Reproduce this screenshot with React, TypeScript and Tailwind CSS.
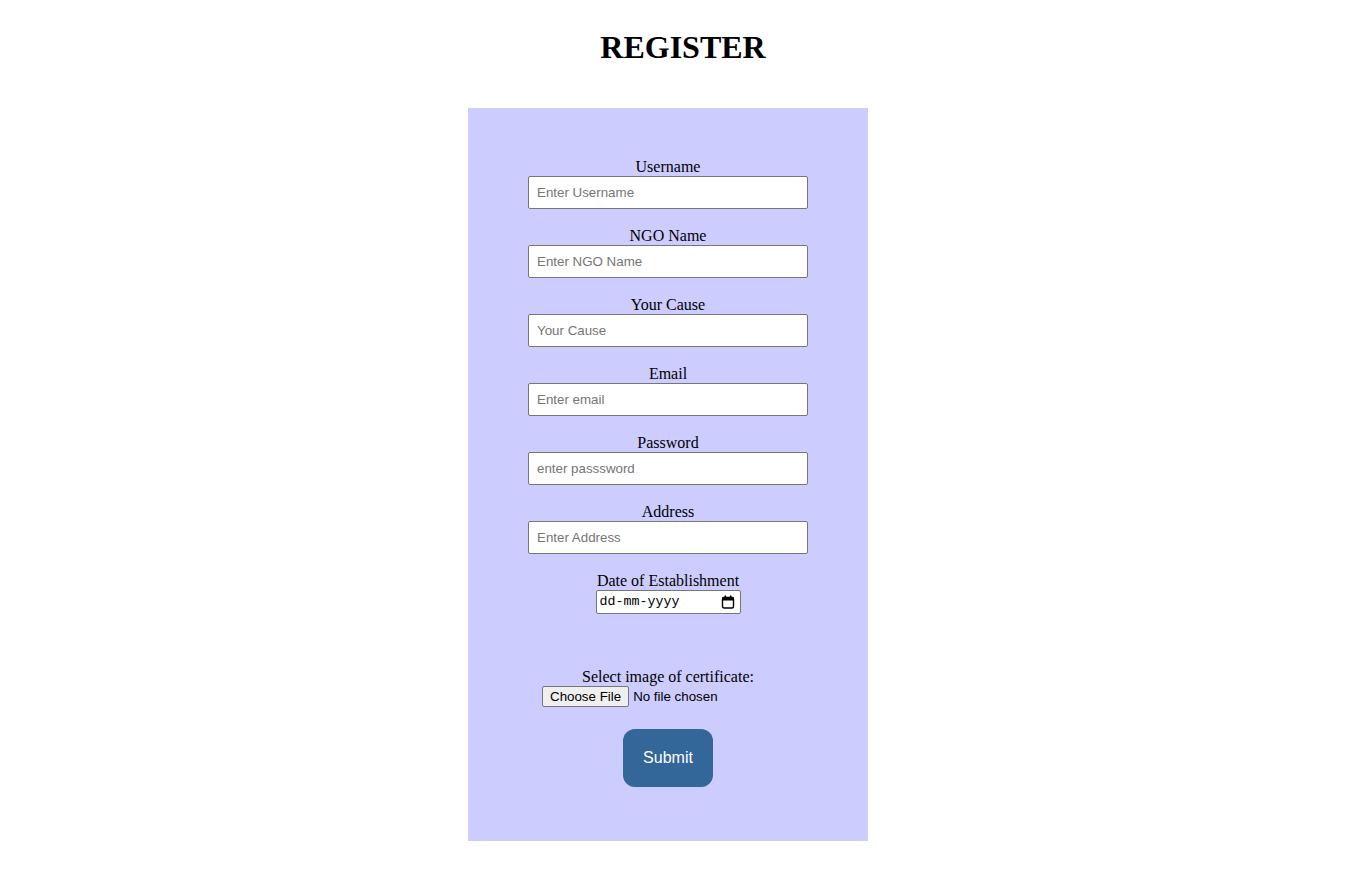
import React from 'react';

interface Field {
  label: string;
  placeholder: string;
  type: string;
}

const fields: Field[] = [
  { label: 'Username', placeholder: 'Enter Username', type: 'text' },
  { label: 'NGO Name', placeholder: 'Enter NGO Name', type: 'text' },
  { label: 'Your Cause', placeholder: 'Your Cause', type: 'text' },
  { label: 'Email', placeholder: 'Enter email', type: 'email' },
  { label: 'Password', placeholder: 'enter passsword', type: 'text' },
  { label: 'Address', placeholder: 'Enter Address', type: 'text' },
];

const CalendarIcon = () => (
  <svg width="14" height="14" viewBox="0 0 14 14" fill="none">
    <rect x="1.5" y="2.5" width="11" height="10.5" rx="1.5" stroke="#000" strokeWidth="1.4" />
    <rect x="1.5" y="2.5" width="11" height="3" fill="#000" />
    <rect x="3.5" y="0.5" width="1.6" height="3" fill="#000" />
    <rect x="8.9" y="0.5" width="1.6" height="3" fill="#000" />
  </svg>
);

export default function App() {
  return (
    <div className="min-h-screen bg-white text-black font-['Liberation_Serif',serif]">
      {/* Title */}
      <h1 className="pt-[29px] text-center text-[32px] leading-[37px] font-bold">REGISTER</h1>

      {/* Form panel */}
      <div className="pr-[30px]">
        <form className="mx-auto mt-[42px] w-[400px] bg-[#ccccff] pt-[50px] pb-[54px] flex flex-col items-center">
          {fields.map((f) => (
            <div key={f.label} className="flex flex-col items-center mb-[18px]">
              <label className="text-[16px] leading-[18px]">{f.label}</label>
              <input
                type={f.type}
                placeholder={f.placeholder}
                className="w-[280px] h-[33px] bg-white border border-[#767676] rounded-[2px] px-[8px] text-[13.33px] font-['Liberation_Sans',Arial,sans-serif] placeholder:text-[#757575] outline-none"
              />
            </div>
          ))}

          <div className="flex flex-col items-center">
            <label className="text-[16px] leading-[18px]">Date of Establishment</label>
            <div className="w-[145px] h-[24px] bg-white border border-[#767676] rounded-[2px] pl-[3px] pr-[5px] flex items-center justify-between text-[13.33px] font-['Liberation_Mono',monospace]">
              <span>dd-mm-yyyy</span>
              <CalendarIcon />
            </div>
          </div>

          <div className="flex flex-col items-center mt-[54px]">
            <label className="text-[16px] leading-[18px]">Select image of certificate:</label>
            <input
              type="file"
              className="w-[252px] h-[21px] text-[13.33px] font-['Liberation_Sans',Arial,sans-serif] file:h-[21px] file:mr-[4px] file:px-[7px] file:border file:border-solid file:border-[#767676] file:rounded-[2px] file:bg-[#efefef]"
            />
          </div>

          <button
            type="button"
            className="mt-[22px] w-[90px] h-[58px] rounded-[12px] bg-[#336699] text-white text-[16px] font-['Liberation_Sans',Arial,sans-serif]"
          >
            Submit
          </button>
        </form>
      </div>
    </div>
  );
}
